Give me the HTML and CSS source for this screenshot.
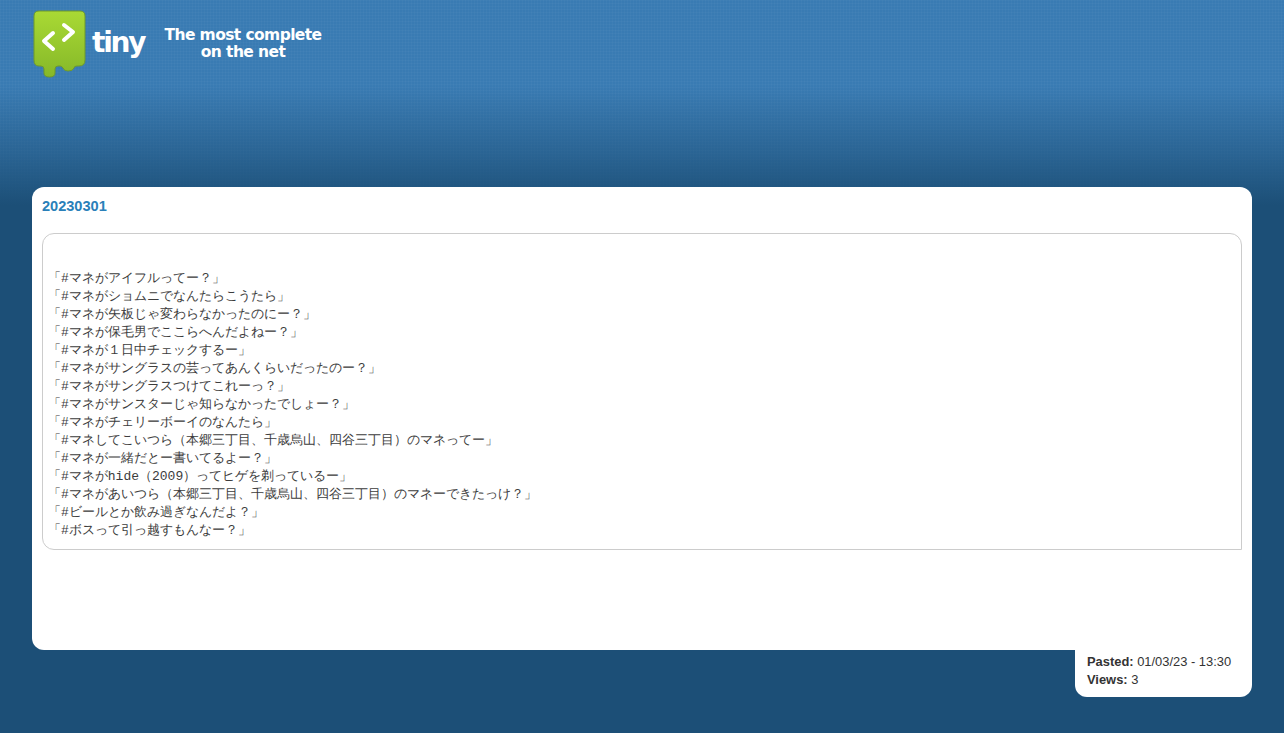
FILE: index.html
```html
<!DOCTYPE html>
<html>
<head>
<meta charset="utf-8">
<title>20230301 - tiny</title>
<link rel="stylesheet" href="styles.css">
</head>
<body>
<header class="site-header">
  <svg class="logo-mark" width="56" height="70" viewBox="0 0 56 70" aria-hidden="true">
    <defs>
      <linearGradient id="logoFill" x1="0" y1="0" x2="0" y2="1">
        <stop offset="0" stop-color="#a9d934"/>
        <stop offset="1" stop-color="#86b829"/>
      </linearGradient>
    </defs>
    <path d="M6 1H47Q52 1 52 6V50Q52 56 46 56H44Q41 56 41 58Q40 61 35 61Q31 61 30 58Q29 56 27 56H25Q22 56 22 59V63Q22 67 16.500 67Q11 67 11 63V59Q11 56 8 56H6Q1 56 1 50V6Q1 1 6 1Z" fill="url(#logoFill)" stroke="#6f9a2a" stroke-width="1"/>
    <path d="M20 23L11 31L20 39M31 15L40 22L31 30" fill="none" stroke="#fff" stroke-width="4" stroke-linecap="round" stroke-linejoin="round"/>
  </svg>
  <div class="logo-word">tiny</div>
  <div class="tagline">The most complete<br>on the net</div>
</header>
<main class="paste-card">
  <h1 class="paste-title">20230301</h1>
  <div class="paste-body">
「#マネがアイフルってー？」
「#マネがショムニでなんたらこうたら」
「#マネが矢板じゃ変わらなかったのにー？」
「#マネが保毛男でここらへんだよねー？」
「#マネが１日中チェックするー」
「#マネがサングラスの芸ってあんくらいだったのー？」
「#マネがサングラスつけてこれーっ？」
「#マネがサンスターじゃ知らなかったでしょー？」
「#マネがチェリーボーイのなんたら」
「#マネしてこいつら（本郷三丁目、千歳烏山、四谷三丁目）のマネってー」
「#マネが一緒だとー書いてるよー？」
「#マネがhide（2009）ってヒゲを剃っているー」
「#マネがあいつら（本郷三丁目、千歳烏山、四谷三丁目）のマネーできたっけ？」
「#ビールとか飲み過ぎなんだよ？」
「#ボスって引っ越すもんなー？」</div>
</main>
<aside class="paste-meta">
  <div><b>Pasted:</b> 01/03/23 - 13:30</div>
  <div><b>Views:</b> 3</div>
</aside>
</body>
</html>
```

FILE: styles.css
```css
html, body {
  margin: 0;
  height: 733px;
  overflow: hidden;
}

body {
  font-family: "Liberation Sans", Arial, sans-serif;
  font-size: 12.9px;
  color: #333;
  background-color: #1c4f77;
  background-image:
    linear-gradient(180deg, rgba(28, 79, 119, 0) 0, rgba(28, 79, 119, 0) 85px, rgba(28, 79, 119, 0.5) 150px, #1c4f77 205px),
    repeating-linear-gradient(0deg, rgba(255, 255, 255, 0.022) 0 1px, transparent 1px 3px),
    repeating-linear-gradient(90deg, rgba(255, 255, 255, 0.022) 0 1px, transparent 1px 3px),
    linear-gradient(180deg, #397bb3, #397bb3);
  background-size: 100% 205px;
  background-repeat: no-repeat;
}

.site-header {
  box-sizing: border-box;
  height: 187px;
  padding: 10px 0 0 33px;
  display: flex;
  align-items: flex-start;
}

.logo-mark {
  flex: none;
}

.logo-word {
  margin: 12px 0 0 3px;
  width: 54px;
  color: #fff;
  font-family: "DejaVu Sans", sans-serif;
  font-weight: 700;
  font-size: 28px;
  line-height: 42px;
  letter-spacing: -2.2px;
}

.tagline {
  margin: 17px 0 0 18px;
  width: 158px;
  color: #fff;
  font-family: "DejaVu Sans", sans-serif;
  font-weight: 700;
  font-size: 15.5px;
  line-height: 17px;
  letter-spacing: -0.6px;
  text-align: center;
  white-space: nowrap;
}

.paste-card {
  box-sizing: border-box;
  width: 1220px;
  height: 463px;
  margin-left: 32px;
  padding: 10px;
  background: #fff;
  border-radius: 12px 12px 0 12px;
}

.paste-title {
  margin: 0 0 18px;
  color: #2a80b9;
  font-size: 14.55px;
  font-weight: 700;
  line-height: 18px;
}

.paste-body {
  box-sizing: border-box;
  width: 1200px;
  height: 317px;
  padding: 18px 5px 0;
  border: 1px solid #ccc;
  border-radius: 12px 12px 0 12px;
  color: #3c3c3c;
  font-family: "Liberation Mono", "DejaVu Sans", monospace;
  font-size: 13px;
  line-height: 18px;
  white-space: pre;
  overflow: hidden;
}

.paste-meta {
  box-sizing: border-box;
  width: 177px;
  height: 47px;
  margin-left: 1075px;
  padding: 3px 12px 0;
  background: #fff;
  border-radius: 0 0 12px 12px;
  line-height: 18px;
}

.paste-meta b {
  font-weight: 700;
}
```
